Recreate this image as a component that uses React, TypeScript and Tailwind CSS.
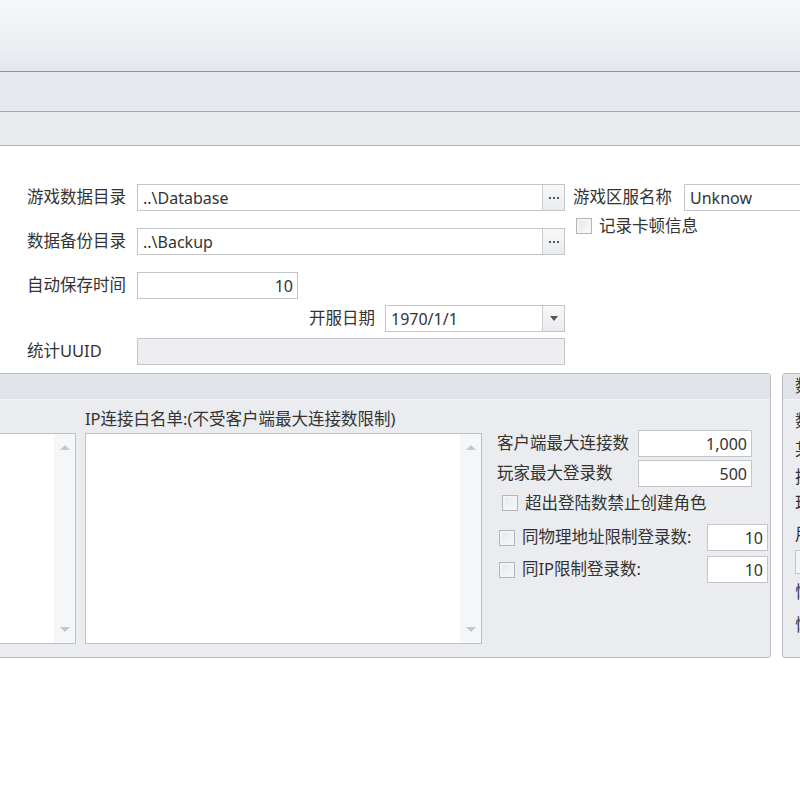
import React from 'react';

const FONT = { fontFamily: '"Noto Sans", "Noto Sans CJK SC", sans-serif' };

function Ellipsis() {
  return (
    <div className="flex h-full w-[22px] items-center justify-center gap-[2px] border-l border-[#c9cbce] bg-gradient-to-b from-[#f7f8f9] to-[#e9ebee]">
      <span className="h-[2px] w-[2px] bg-[#555]" />
      <span className="h-[2px] w-[2px] bg-[#555]" />
      <span className="h-[2px] w-[2px] bg-[#555]" />
    </div>
  );
}

function DropArrow() {
  return (
    <div className="flex h-full w-[22px] items-center justify-center border-l border-[#c9cbce] bg-gradient-to-b from-[#f7f8f9] to-[#e9ebee]">
      <svg width="8" height="5" viewBox="0 0 8 5">
        <path d="M0 0 L8 0 L4 5 Z" fill="#555" />
      </svg>
    </div>
  );
}

function Checkbox() {
  return (
    <div className="h-[16px] w-[16px] shrink-0 border border-[#b3b5b8] bg-[#f3f4f5] p-[2px]">
      <div className="h-full w-full bg-gradient-to-br from-[#e6e8ea] to-[#f7f8f9]" />
    </div>
  );
}

function ScrollBar() {
  return (
    <div className="flex h-full w-[21px] flex-col items-center justify-between bg-[#f5f6f7] py-[11px]">
      <svg width="10" height="5" viewBox="0 0 10 5">
        <path d="M0 5 L10 5 L5 0 Z" fill="#c4c7cb" />
      </svg>
      <svg width="10" height="5" viewBox="0 0 10 5">
        <path d="M0 0 L10 0 L5 5 Z" fill="#c4c7cb" />
      </svg>
    </div>
  );
}

function NumBox({ value, w }: { value: string; w: string }) {
  return (
    <div className={`flex h-[27px] ${w} shrink-0 items-center justify-end border border-[#c3c5c8] bg-white pr-[4px] text-[16px] text-[#333]`}>
      {value}
    </div>
  );
}

export default function App() {
  return (
    <div className="relative h-[800px] w-[800px] overflow-hidden bg-white text-[#333]" style={FONT}>
      {/* ribbon bands */}
      <div className="h-[72px] border-b border-[#8e9196] bg-gradient-to-b from-[#f6f7f9] via-[#eef1f3] to-[#e4e7ef]" />
      <div className="h-[40px] border-b border-[#a3a6aa] bg-[#e7e9ee]" />
      <div className="h-[34px] border-b border-[#b3b5b8] bg-[#e8eaee]" />

      {/* form */}
      <div className="flex pl-[27px] pt-[38px] text-[16.5px]">
        <div className="flex w-[538px] shrink-0 flex-col">
          <div className="flex h-[27px] items-center">
            <span className="w-[110px] shrink-0">游戏数据目录</span>
            <div className="flex h-full flex-1 items-center border border-[#c3c5c8] bg-white">
              <span className="flex-1 pl-[5px] text-[16px]">..\Database</span>
              <Ellipsis />
            </div>
          </div>
          <div className="mt-[17px] flex h-[27px] items-center">
            <span className="w-[110px] shrink-0">数据备份目录</span>
            <div className="flex h-full flex-1 items-center border border-[#c3c5c8] bg-white">
              <span className="flex-1 pl-[5px] text-[16px]">..\Backup</span>
              <Ellipsis />
            </div>
          </div>
          <div className="mt-[17px] flex h-[27px] items-center">
            <span className="w-[110px] shrink-0">自动保存时间</span>
            <NumBox value="10" w="w-[161px]" />
          </div>
          <div className="mt-[6px] flex h-[27px] items-center justify-end">
            <span className="mr-[10px]">开服日期</span>
            <div className="flex h-full w-[180px] items-center border border-[#c3c5c8] bg-white">
              <span className="flex-1 pl-[5px] text-[16px]">1970/1/1</span>
              <DropArrow />
            </div>
          </div>
          <div className="mt-[6px] flex h-[27px] items-center">
            <span className="w-[110px] shrink-0">统计UUID</span>
            <div className="h-full flex-1 border border-[#c3c5c8] bg-[#eceef1]" />
          </div>
        </div>
        <div className="ml-[8px] flex flex-col">
          <div className="flex h-[27px] items-center">
            <span className="w-[111px] shrink-0">游戏区服名称</span>
            <div className="flex h-full w-[140px] shrink-0 items-center border border-[#c3c5c8] bg-white pl-[5px] text-[16px]">
              Unknow
            </div>
          </div>
          <div className="mt-[7px] flex h-[16px] items-center gap-[7px] pl-[3px]">
            <Checkbox />
            <span>记录卡顿信息</span>
          </div>
        </div>
      </div>

      {/* group boxes */}
      <div className="mt-[8px] flex gap-[11px] text-[16.5px]">
        <div className="ml-[-20px] flex h-[285px] w-[791px] shrink-0 flex-col rounded-[3px] border border-[#b9bcc0] bg-[#eaecef]">
          <div className="h-[26px] border-b border-[#f3f4f6] bg-[#e1e4e8]" />
          <div className="flex flex-1 items-start pl-[8px]">
            <div className="mt-[33px] flex h-[211px] w-[87px] justify-end border border-[#bfc2c5] bg-white">
              <ScrollBar />
            </div>
            <div className="ml-[9px] flex flex-col pt-[9px]">
              <span className="h-[20px] leading-[20px]">IP连接白名单:(不受客户端最大连接数限制)</span>
              <div className="mt-[4px] flex h-[211px] w-[397px] justify-end border border-[#bfc2c5] bg-white">
                <ScrollBar />
              </div>
            </div>
            <div className="ml-[15px] flex w-[271px] flex-col pt-[30px]">
              <div className="flex h-[27px] items-center">
                <span className="w-[141px] shrink-0">客户端最大连接数</span>
                <NumBox value="1,000" w="w-[114px]" />
              </div>
              <div className="mt-[3px] flex h-[27px] items-center">
                <span className="w-[141px] shrink-0">玩家最大登录数</span>
                <NumBox value="500" w="w-[114px]" />
              </div>
              <div className="mt-[8px] flex h-[16px] items-center gap-[7px] pl-[5px]">
                <Checkbox />
                <span>超出登陆数禁止创建角色</span>
              </div>
              <div className="mt-[13px] flex h-[27px] items-center pl-[2px]">
                <Checkbox />
                <span className="ml-[7px] flex-1">同物理地址限制登录数:</span>
                <NumBox value="10" w="w-[61px]" />
              </div>
              <div className="mt-[5px] flex h-[27px] items-center pl-[2px]">
                <Checkbox />
                <span className="ml-[7px] flex-1">同IP限制登录数:</span>
                <NumBox value="10" w="w-[61px]" />
              </div>
            </div>
          </div>
        </div>

        <div className="flex h-[285px] w-[80px] shrink-0 flex-col rounded-[3px] border border-[#b9bcc0] bg-[#eaecef]">
          <div className="flex h-[26px] items-center border-b border-[#f3f4f6] bg-[#e1e4e8] pl-[12px]">
            <span>数据</span>
          </div>
          <div className="flex flex-col pl-[12px] pt-[8px] leading-[26px] text-[#333]">
            <span>数据</span>
            <span className="mt-[3px]">某项</span>
            <span className="mt-[1px]">推送</span>
            <span>玩家</span>
            <span className="mt-[5px]">用户</span>
            <div className="mt-[3px] h-[24px] w-[60px] border border-[#c3c5c8] bg-[#f3f4f5]" />
            <span className="mt-[5px]">恢复</span>
            <span className="mt-[7px]">恢复</span>
          </div>
        </div>
      </div>
    </div>
  );
}
